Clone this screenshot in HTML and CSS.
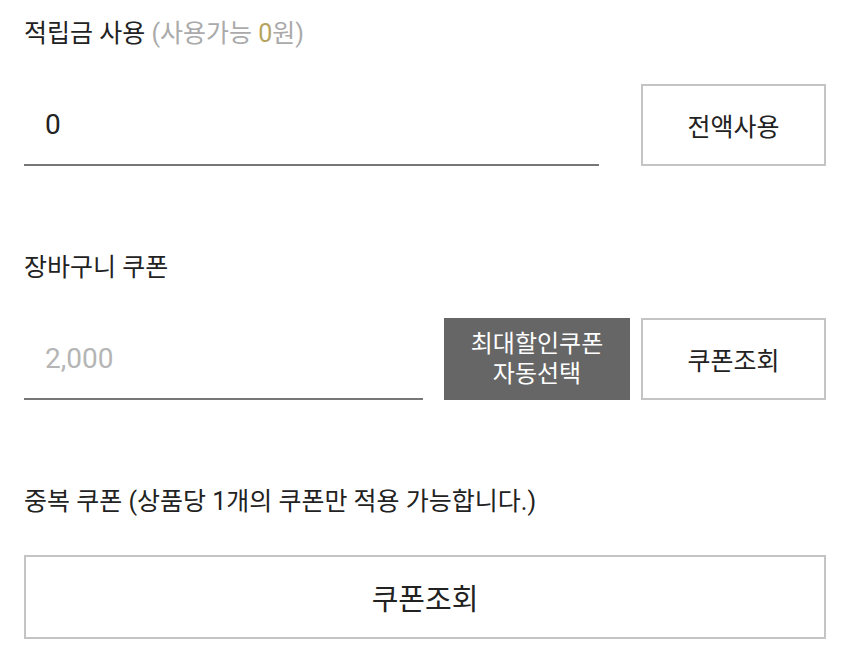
FILE: index.html
```html
<!DOCTYPE html>
<html lang="ko">
<head>
    <meta charset="UTF-8">
    <meta name="viewport" content="width=device-width, initial-scale=1.0">
    <title>할인 / 적립금</title>
    <link rel="stylesheet" href="styles.css">
</head>
<body>
    <div class="container">
        <div class="section">
            <div class="section-title">적립금 사용 <span class="sub">(사용가능 <em>0</em>원)</span></div>
            <div class="field-row">
                <input type="text" class="field" value="0">
                <button class="line-btn">전액사용</button>
            </div>
        </div>

        <div class="section">
            <div class="section-title">장바구니 쿠폰</div>
            <div class="field-row coupon-row">
                <input type="text" class="field" placeholder="2,000">
                <button class="dark-btn">최대할인쿠폰<br>자동선택</button>
                <button class="line-btn">쿠폰조회</button>
            </div>
        </div>

        <div class="section">
            <div class="section-title">중복 쿠폰 (상품당 1개의 쿠폰만 적용 가능합니다.)</div>
            <button class="line-btn wide-btn">쿠폰조회</button>
        </div>
    </div>
</body>
</html>
```

FILE: styles.css
```css
* {
    margin: 0;
    padding: 0;
    box-sizing: border-box;
}

body {
    font-family: Roboto, "Noto Sans CJK KR", sans-serif;
    background: #fff;
    color: #222;
}

.container {
    padding: 18px 24px 0 24px;
}

.section {
    margin-bottom: 86px;
}

.section:last-child {
    margin-bottom: 0;
}

.section:last-child .section-title {
    margin-bottom: 37px;
}

.section-title {
    font-size: 25px;
    line-height: 32px;
    height: 32px;
    color: #222;
    margin-bottom: 34px;
    white-space: nowrap;
}

.section-title .sub {
    color: #aaa;
}

.section-title em {
    font-style: normal;
    color: #b5a35f;
}

.field-row {
    display: flex;
    align-items: flex-end;
    gap: 42px;
}

.field {
    flex: 1;
    min-width: 0;
    height: 82px;
    border: none;
    border-bottom: 2px solid #777;
    outline: none;
    padding: 0 21px;
    font-family: inherit;
    font-size: 28px;
    color: #222;
    background: transparent;
}

.field::placeholder {
    color: #b5b5b5;
}

.line-btn {
    width: 185px;
    height: 82px;
    border: 2px solid #c4c4c4;
    background: #fff;
    font-family: inherit;
    font-size: 25px;
    color: #222;
    cursor: pointer;
}

.coupon-row {
    gap: 11px;
}

.coupon-row .field {
    margin-right: 10px;
}

.dark-btn {
    width: 186px;
    height: 82px;
    border: none;
    background: #666;
    color: #fff;
    font-family: inherit;
    font-size: 24px;
    line-height: 30px;
    cursor: pointer;
}

.wide-btn {
    width: 100%;
    height: 84px;
    font-size: 29px;
}
```
